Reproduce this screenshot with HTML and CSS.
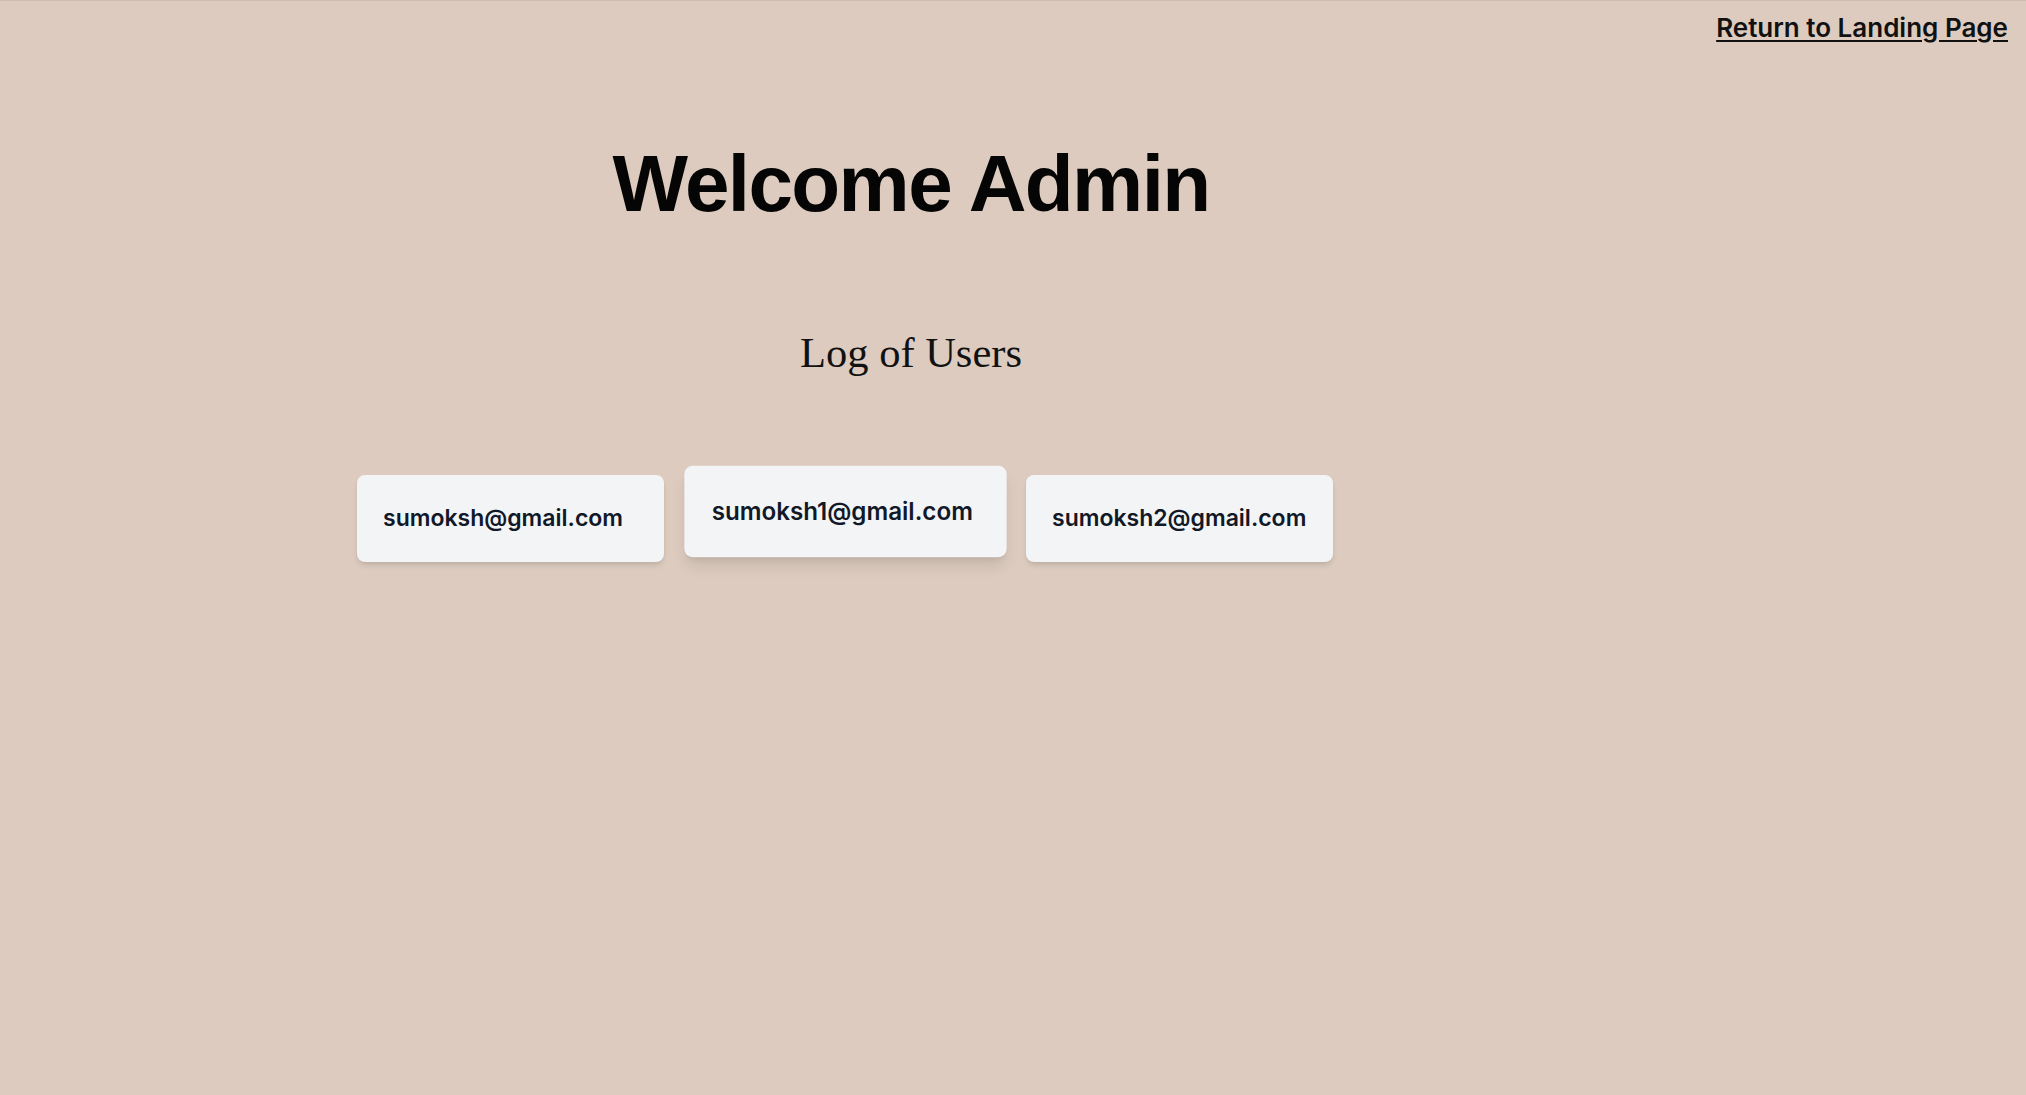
FILE: index.html
```html
<!DOCTYPE html>
<html lang="en">
<head>
<meta charset="utf-8">
<title>Admin</title>
<link rel="stylesheet" href="styles.css">
</head>
<body>
  <header class="topbar">
    <a class="back-link" href="#">Return to Landing Page</a>
  </header>
  <main class="main">
    <section class="hero">
      <h1 class="title">Welcome Admin</h1>
      <h2 class="subtitle">Log of Users</h2>
    </section>
    <ul class="user-list">
      <li class="user-card">sumoksh@gmail.com</li>
      <li class="user-card user-card--hover">sumoksh1@gmail.com</li>
      <li class="user-card">sumoksh2@gmail.com</li>
    </ul>
  </main>
</body>
</html>
```

FILE: styles.css
```css
html, body {
  margin: 0;
  padding: 0;
}

body {
  min-height: 100vh;
  background: #dccbbe;
  border-top: 1px solid #cdbcaf;
  box-sizing: border-box;
  font-family: Inter, "Noto Sans", sans-serif;
  color: #111;
}

.topbar {
  display: flex;
  justify-content: flex-end;
  padding: 11px 18px 0 0;
}

.back-link {
  font-family: Inter, sans-serif;
  font-size: 26px;
  font-weight: 600;
  line-height: 31.5px;
  color: #111;
  text-decoration: underline;
  text-decoration-thickness: 2px;
  text-underline-offset: 3px;
}

.main {
  display: flex;
  flex-direction: column;
}

.hero {
  width: 1822px;
  display: flex;
  flex-direction: column;
  align-items: center;
  text-align: center;
}

.title {
  margin: 100px 0 0;
  font-family: "Liberation Sans", Arial, sans-serif;
  font-weight: 700;
  font-size: 80px;
  line-height: 80px;
  letter-spacing: -1.6px;
  color: #050505;
}

.subtitle {
  margin: 104px 0 0;
  font-family: "Liberation Serif", "Times New Roman", serif;
  font-weight: 400;
  font-size: 42.5px;
  line-height: 49px;
  color: #111;
}

.user-list {
  list-style: none;
  margin: 98px 0 0 357px;
  padding: 0;
  display: grid;
  grid-template-columns: repeat(3, 307px);
  column-gap: 27.5px;
}

.user-card {
  background: #f3f4f6;
  border-radius: 8px;
  padding: 27.5px 26px;
  font-family: Inter, sans-serif;
  font-size: 23px;
  font-weight: 600;
  line-height: 32px;
  color: #111827;
  box-shadow: 0 4px 6px -1px rgba(0, 0, 0, 0.1), 0 2px 4px -2px rgba(0, 0, 0, 0.1);
}

.user-card--hover {
  transform: translateY(-7px) scale(1.05);
  box-shadow: 0 10px 15px -3px rgba(0, 0, 0, 0.1), 0 4px 6px -4px rgba(0, 0, 0, 0.1);
}
```
